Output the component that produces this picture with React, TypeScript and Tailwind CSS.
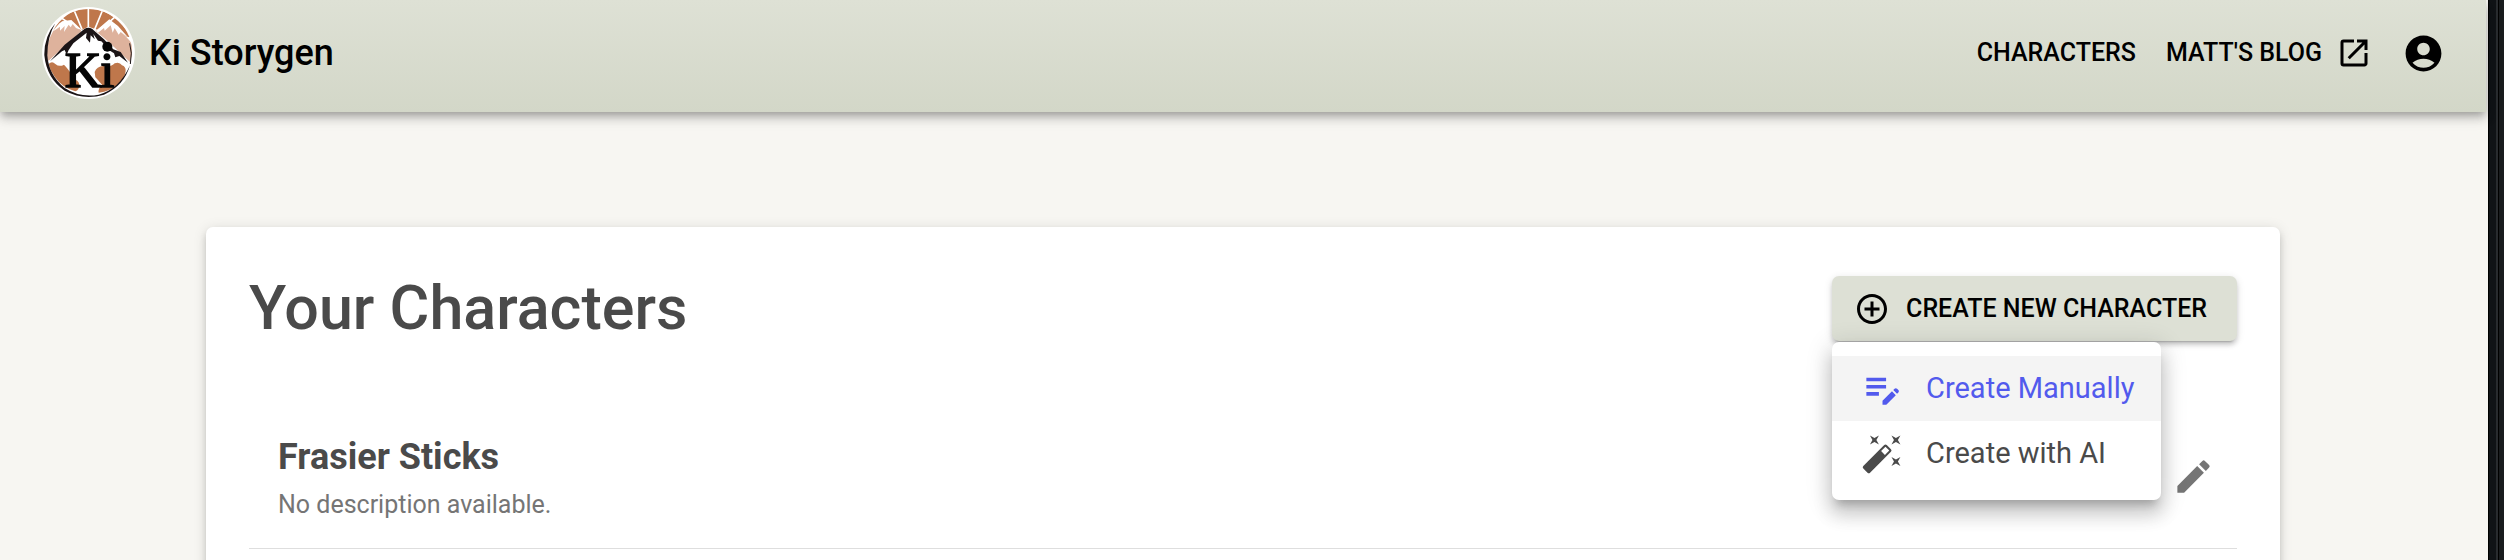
import { useState } from "react";
import {
  MdAccountCircle,
  MdAddCircleOutline,
  MdAutoFixHigh,
  MdEdit,
  MdEditNote,
  MdOpenInNew,
} from "react-icons/md";

function Logo() {
  return (
    <svg viewBox="36 21 279 276" className="h-[92px] w-[93px] shrink-0" role="img" aria-label="Ki">
      <defs>
        <clipPath id="disc">
          <circle cx="175" cy="159" r="132" />
        </clipPath>
      </defs>
      <ellipse cx="175.500" cy="159" rx="139" ry="138" fill="#fff" />
      <g clipPath="url(#disc)">
        <path d="M70 90 Q110 26 175 26 Q250 26 305 112 L290 110 L240 62 L205 90 L175 80 L150 92 L118 62 L90 68Z" fill="#bf774b" />
        <path d="M175 22V84M132 30L156 88M218 30L194 88M92 52L112 66M256 50L240 64" stroke="#fff" strokeWidth="5" />
        <path d="M52 180 Q46 130 70 92 L96 70 L122 64 L154 94 L120 124 L56 182Z" fill="#deb29c" />
        <path d="M196 92 L238 62 L262 82 L306 130 Q310 160 300 186 L232 122Z" fill="#deb29c" />
        <path d="M70 94 L96 64 L124 60 L158 92 L138 84 L128 72 L122 82 L116 74 L102 96 L104 78 L90 92 L90 80Z" fill="#fff" />
        <path d="M198 92 L238 58 L264 78 L296 114 L272 96 L266 104 L254 84 L248 98 L242 76 L224 92 L222 84 L204 98Z" fill="#fff" />
        <path d="M52 190 L174 94 L302 196 V300 H52Z" fill="#fff" />
        <path d="M56 192 Q66 182 76 192 Q88 202 102 194 Q112 204 120 216 L124 238 Q146 238 148 254 Q148 270 136 274 Q96 262 74 230 Q60 212 56 192Z" fill="#bf774b" />
        <path d="M194 216 Q200 200 220 198 Q244 202 254 190 Q268 184 276 196 Q288 200 287 214 Q284 238 262 254 Q240 274 206 278 Q204 264 216 254 Q204 240 196 232Z" fill="#bf774b" />
      </g>
      <path d="M60 184 L104 134 L164 86 Q175 80 186 86 L222 118 L250 148 L272 156 L294 188 L268 168 L256 172 L252 160 L240 152 L214 124 L204 122 L190 102 L194 118 L182 106 L180 128 L168 114 L170 98 L130 130 L116 150 L110 164 L104 150 L96 154 Z" fill="#1b1416" />
      <path d="M76 70 Q42 110 43 166 Q50 236 104 272 Q160 302 222 284 Q282 258 300 196 Q268 268 206 284 Q150 294 104 264 Q56 226 52 166 Q52 110 76 70Z" fill="#1b1416" />
      <path d="M299 130 Q308 158 301 192" fill="none" stroke="#1b1416" strokeWidth="3" />
      <g fontFamily="'Liberation Serif', serif" fontSize="152" fill="#050505" stroke="#050505" strokeWidth="5">
        <text x="104" y="262">K</text>
        <text x="211" y="262">i</text>
      </g>
      <circle cx="232" cy="140" r="15" fill="#050505" />
    </svg>
  );
}

const menuItems = [
  { label: "Create Manually", icon: MdEditNote },
  { label: "Create with AI", icon: MdAutoFixHigh },
];

function CreateMenu() {
  const [active, setActive] = useState(0);
  return (
    <div className="relative">
      <button
        type="button"
        aria-haspopup="menu"
        aria-expanded="true"
        className="flex h-[65px] items-center gap-4 rounded-[7px] bg-[#dde0d5] pr-[30px] pl-[22px] text-[25px] leading-[44px] font-medium text-black uppercase shadow-[0_5px_2px_-4px_rgba(0,0,0,0.2),0_4px_4px_0_rgba(0,0,0,0.14),0_2px_9px_0_rgba(0,0,0,0.12)]"
      >
        <MdAddCircleOutline className="size-9" />
        Create new character
      </button>
      <div
        role="menu"
        className="absolute top-[66px] left-0 rounded-[7px] bg-white py-[14px] text-[29px] leading-[43px] whitespace-nowrap shadow-[0_9px_9px_-5px_rgba(0,0,0,0.2),0_14px_18px_2px_rgba(0,0,0,0.14),0_5px_25px_4px_rgba(0,0,0,0.12)]"
      >
        {menuItems.map(({ label, icon: Icon }, i) => (
          <button
            key={label}
            type="button"
            role="menuitem"
            onMouseEnter={() => setActive(i)}
            className={
              i === active
                ? "flex h-[65px] w-full items-center gap-[22px] bg-[#f4f4f4] pr-[27px] pl-[29px] text-[#525aed]"
                : "flex h-[65px] w-full items-center gap-[22px] pr-[27px] pl-[29px] text-[#4a4a4a]"
            }
          >
            <Icon className="size-[43px]" />
            {label}
          </button>
        ))}
      </div>
    </div>
  );
}

export default function App() {
  return (
    <div className="flex h-screen overflow-hidden bg-[#f7f6f2] font-[Roboto,sans-serif] text-[#4a4a4a]">
      <div className="mr-[2px] min-w-0 flex-1">
        <header className="relative flex items-center justify-between bg-linear-to-b from-[#dee1d5] to-[#d3d7c8] pt-[7px] pr-[41px] pb-[13px] pl-[42px] text-black shadow-[0_4px_7px_-2px_rgba(0,0,0,0.2),0_7px_9px_0_rgba(0,0,0,0.14),0_2px_18px_0_rgba(0,0,0,0.12)]">
          <a href="#" className="flex items-center gap-[14px] text-[36px] leading-[58px] font-medium">
            <Logo />
            Ki Storygen
          </a>
          <nav className="flex items-center gap-[30px] text-[25px] leading-[44px] font-medium uppercase">
            <a href="#characters">Characters</a>
            <a href="#blog" className="flex items-center gap-[14px]">
              Matt&apos;s Blog
              <MdOpenInNew className="size-9" />
            </a>
            <button type="button" aria-label="Account">
              <MdAccountCircle className="size-[43px]" />
            </button>
          </nav>
        </header>

        <main className="mx-auto mt-[115px] min-h-[720px] max-w-[2074px] rounded-[7px] bg-white px-[43px] pt-11 shadow-[0_5px_5px_-4px_rgba(0,0,0,0.2),0_5px_7px_0_rgba(0,0,0,0.14),0_2px_14px_0_rgba(0,0,0,0.12)]">
          <div className="flex items-center justify-between">
            <h1 className="text-[61px] leading-[75px] font-medium">Your Characters</h1>
            <CreateMenu />
          </div>
          <ul className="mt-[58px]">
            <li className="flex items-center justify-between border-b border-[#dedede] py-6 pr-[22px] pl-[29px]">
              <div>
                <h2 className="text-[36px] leading-[58px] font-bold">Frasier Sticks</h2>
                <p className="text-[25px] leading-[38px] text-[#757575]">No description available.</p>
              </div>
              <button type="button" aria-label="Edit Frasier Sticks" className="text-[#757575]">
                <MdEdit className="size-[43px]" />
              </button>
            </li>
          </ul>
        </main>
      </div>
      <div className="flex w-4 bg-[#101316]">
        <div className="w-px bg-black" />
        <div className="ml-[7px] w-[2px] bg-[#292c2f]" />
        <div className="w-px bg-black" />
        <div className="flex-1 bg-[#191c1e]" />
      </div>
    </div>
  );
}
